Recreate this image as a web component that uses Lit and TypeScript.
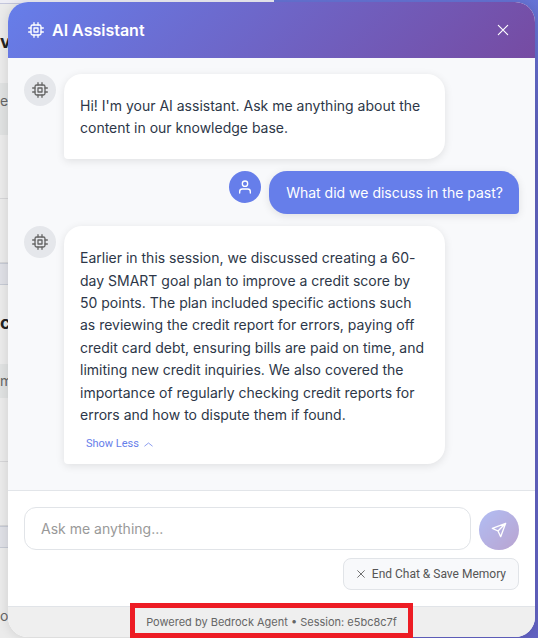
import { LitElement, html, css, svg } from "lit";
import { customElement, property } from "lit/decorators.js";

const chip = svg`<rect x="4.5" y="4.5" width="15" height="15" rx="2.5"/><rect x="9" y="9" width="6" height="6"/><path d="M9 1v3.500M15 1v3.500M9 19.500V23M15 19.500V23M1 9h3.500M1 15h3.500M19.500 9H23M19.500 15H23"/>`;
const user = svg`<circle cx="12" cy="7" r="4"/><path d="M20 21v-2a4 4 0 0 0-4-4H8a4 4 0 0 0-4 4v2"/>`;
const cross = svg`<path d="M4 4l16 16M20 4L4 20"/>`;
const send = svg`<path d="M22 2L2 9.500l8.500 4L14.500 22z M22 2L10.500 13.500"/>`;
const up = svg`<path d="M2 16l10-8 10 8"/>`;

const icon = (shape: unknown, size: number, weight = 2) => html`<svg
  width=${size} height=${size} viewBox="0 0 24 24" fill="none" stroke="currentColor"
  stroke-width=${weight} stroke-linecap="round" stroke-linejoin="round" aria-hidden="true">${shape}</svg>`;

@customElement("chat-message")
class ChatMessage extends LitElement {
  @property({ reflect: true }) from: "bot" | "user" = "bot";

  static styles = css`
    :host { display: flex; gap: 8px; align-items: flex-start; }
    :host([from="user"]) { justify-content: flex-end; }
    svg { display: block; }
    .avatar {
      flex: none; display: grid; place-items: center; width: 32px; height: 32px;
      border-radius: 50%; background: #e5e7eb; color: #666;
    }
    .bubble {
      max-width: 77%; box-sizing: border-box; padding: 21px 16px 19px;
      border-radius: 18px 18px 18px 4px; background: #fff; color: #2d3748;
      font-size: 14px; line-height: 1.6; box-shadow: 0 2px 8px rgba(0, 0, 0, 0.1);
    }
    :host([from="user"]) .avatar { background: #667eea; color: #fff; }
    :host([from="user"]) .bubble {
      padding: 11px 16px 10px 17px; border-radius: 18px 18px 4px 18px; background: #667eea; color: #fff;
    }
  `;

  render() {
    return html`
      <div class="avatar">${this.from === "bot" ? icon(chip, 16) : icon(user, 16)}</div>
      <div class="bubble"><slot></slot></div>
    `;
  }
}

/* The page that the chat window floats over. */
@customElement("page-behind")
class PageBehind extends LitElement {
  static styles = css`
    :host {
      display: block; overflow: hidden; background: #ebebeb; color: #666;
      font: 14px/20px Inter, sans-serif; white-space: nowrap;
    }
    div { box-sizing: border-box; display: flex; align-items: center; }
    .top { height: 4px; background: #ededf5; border-bottom: 1px solid #c3c6dc; }
    .title { height: 79px; padding-bottom: 4px; color: #222; font-size: 18px; font-weight: 700; }
    .head { height: 52px; padding-bottom: 16px; background: #e0e2e2; }
    .short { height: 34px; padding: 0; }
    .cell { height: 64px; border-bottom: 1px solid #d6d6d8; }
    .band { height: 22px; background: #dfe0e6; border: solid #c6cad4; border-width: 1px 0; }
    .last { height: 136px; }
  `;

  render() {
    return html`
      <div class="top"></div>
      <div class="title">v</div>
      <div class="head">e</div>
      <div class="cell"></div>
      <div class="cell"></div>
      <div class="band"></div>
      <div class="title">c</div>
      <div class="head short">m</div>
      <div class="cell"></div>
      <div class="cell"></div>
      <div class="band"></div>
      <div class="last">o</div>
    `;
  }
}

@customElement("app-root")
class AppRoot extends LitElement {
  static styles = css`
    :host {
      position: relative; display: flex; box-sizing: border-box; min-height: 100vh; padding: 2px 3px 1px 8px;
      background: linear-gradient(#6674d6, #5f62be 20%, #6262c2);
      font-family: Inter, "Liberation Sans", sans-serif;
    }
    svg { display: block; }
    button { font-family: inherit; cursor: pointer; }
    page-behind { position: absolute; inset: 0 auto 0 0; width: 51%; }
    .chat {
      position: relative; flex: 1; min-width: 0; display: flex; flex-direction: column;
      border-radius: 20px; background: #fff; box-shadow: 0 0 12px rgba(0, 0, 0, 0.12);
    }
    header {
      display: flex; align-items: center; gap: 8px; height: 56px; padding: 0 16px 0 20px; box-sizing: border-box;
      border-radius: 20px 20px 0 0; background: linear-gradient(135deg, #667eea, #764ba2); color: #fff;
    }
    h1 { flex: 1; margin: 0; font-size: 16px; line-height: 24px; font-weight: 600; }
    .close {
      display: grid; place-items: center; width: 32px; height: 32px; padding: 0;
      border: 0; background: none; color: inherit;
    }
    main {
      flex: 1; display: flex; flex-direction: column; gap: 12px; padding: 16px; background: #f8f9fb;
    }
    .less {
      display: flex; align-items: center; gap: 5px; margin: 10px 0 -7px; padding: 0 6px; border: 0;
      background: none; color: #667eea; font: 11px/16px Roboto, sans-serif;
    }
    form { padding: 16px; border-top: 1px solid #e2e5e9; }
    .row { display: flex; align-items: flex-end; gap: 8px; }
    input {
      flex: 1; min-width: 0; box-sizing: border-box; height: 43px; padding: 0 16px;
      border: 1px solid #e1e4e8; border-radius: 12px; font: 14px Inter, sans-serif; color: #2d3748;
    }
    input::placeholder { color: #999; }
    .send {
      display: grid; place-items: center; width: 40px; height: 40px; padding: 0; border: 0;
      border-radius: 50%; background: linear-gradient(135deg, #667eea, #764ba2); color: #fff; opacity: 0.5;
    }
    .end {
      display: flex; align-items: center; gap: 6px; margin: 8px 0 0 auto; height: 32px; padding: 0 12px;
      border: 1px solid #e1e4e8; border-radius: 8px; background: #f8f9fb; color: #555;
      font: 12px Roboto, sans-serif;
    }
    footer {
      padding: 8px; border-top: 1px solid #e1e4e8; border-radius: 0 0 20px 20px; background: #efefef;
      color: #666; font-size: 11px; line-height: 14px; text-align: center;
    }
    .session { position: relative; display: inline-block; }
    .session::after {
      content: ""; position: absolute; inset: -12px -16px -9px; border: 5px solid #ed1c24;
    }
  `;

  render() {
    return html`
      <page-behind aria-hidden="true"></page-behind>
      <section class="chat">
        <header>
          ${icon(chip, 16)}
          <h1>AI Assistant</h1>
          <button class="close" aria-label="Close">${icon(cross, 14)}</button>
        </header>
        <main>
          <chat-message>Hi! I'm your AI assistant. Ask me anything about the content in our knowledge base.</chat-message>
          <chat-message from="user">What did we discuss in the past?</chat-message>
          <chat-message>Earlier in this session, we discussed creating a 60-day SMART goal plan to improve a credit score by 50 points. The plan included specific actions such as reviewing the credit report for errors, paying off credit card debt, ensuring bills are paid on time, and limiting new credit inquiries. We also covered the importance of regularly checking credit reports for errors and how to dispute them if found.<button class="less">Show Less ${icon(up, 9)}</button></chat-message>
        </main>
        <form @submit=${(e: Event) => e.preventDefault()}>
          <div class="row">
            <input aria-label="Message" placeholder="Ask me anything..." />
            <button class="send" aria-label="Send">${icon(send, 16)}</button>
          </div>
          <button class="end" type="button">${icon(cross, 10)} End Chat &amp; Save Memory</button>
        </form>
        <footer><span class="session">Powered by Bedrock Agent • Session: e5bc8c7f</span></footer>
      </section>
    `;
  }
}
